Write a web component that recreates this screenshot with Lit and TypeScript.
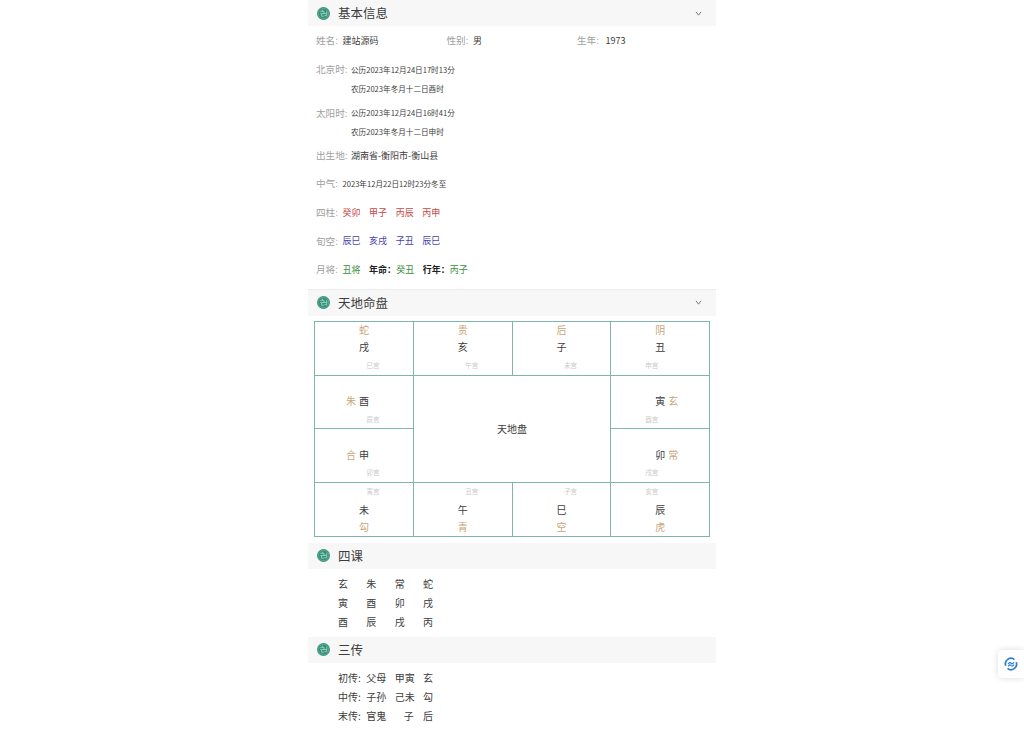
import { LitElement, html, css, svg } from "lit";
import { customElement } from "lit/decorators.js";

const emblem = html`<svg class="emblem" viewBox="0 0 24 24" aria-hidden="true">
  <circle cx="12" cy="12" r="12" fill="#35917a"></circle>
  <circle cx="12" cy="12" r="9.800" fill="none" stroke="#6fb5a0" stroke-width="1.200"></circle>
  ${svg`<path d="M6 8h7v4H8.500v5H13M18 7v9h-4.500M6 12h2.500M11 12h7M10 5v3" fill="none" stroke="#a5d3c4" stroke-width="1.500"></path>`}
</svg>`;

const chevron = html`<svg class="chev" viewBox="0 0 8 6" aria-hidden="true"><path d="M1 1l3 4 3-4" fill="none" stroke="#666" stroke-width="1"></path></svg>`;

function head(title: string, arrow = false, extra = "") {
  return html`<div class="head ${extra}">${emblem}<span class="title">${title}</span>${arrow ? chevron : ""}</div>`;
}

type Cell = { g: string; z: string; p: string; kind: "top" | "bottom" | "left" | "right"; shift?: boolean };

function cell(c: Cell) {
  const lab = html`<div class="line lab ${c.shift ? "shift" : ""}">${c.p}</div>`;
  if (c.kind === "top")
    return html`<div class="cell rise"><div class="line gold">${c.g}</div><div class="line">${c.z}</div>${lab}</div>`;
  if (c.kind === "bottom")
    return html`<div class="cell">${lab}<div class="line">${c.z}</div><div class="line gold">${c.g}</div></div>`;
  return html`<div class="cell rise ${c.kind}">
    <div class="line"></div>
    <div class="line side">
      <span class="gold l">${c.kind === "left" ? c.g : ""}</span><span>${c.z}</span><span class="gold r">${c.kind === "right" ? c.g : ""}</span>
    </div>
    ${lab}
  </div>`;
}

@customElement("app-root")
export class AppRoot extends LitElement {
  static styles = css`
    :host { display: block; font-family: "Noto Sans CJK SC", "Noto Sans", sans-serif; color: #3c3c3c; font-size: 9px; }
    .page { width: 408px; margin: 0 auto; }
    .head { height: 26px; background: #f7f7f7; display: flex; align-items: center; padding: 0 14px 0 9px; }
    .head.ruled { border-top: 1px solid #ececec; }
    .emblem { width: 13px; height: 13px; flex: none; }
    .title { margin-left: 8px; font-size: 12.5px; color: #3c3c3c; flex: 1; line-height: 1; }
    .chev { width: 7px; height: 5px; }
    .info { padding: 0 8px 5.75px; }
    .row { display: flex; align-items: center; height: 28.33px; white-space: nowrap; }
    .row.thin { height: 19px; }
    .trio { display: grid; grid-template-columns: 130.5px 130.5px 1fr; height: 28px; }
    .trio > div { display: flex; align-items: center; }
    .group { margin-top: 5.5px; }
    .late { padding-top: 0.6px; }
    .k { color: #a0a0a0; font-size: 9.6px; width: 26.5px; flex: none; display: inline-block; white-space: nowrap; }
    .k3 { width: 35px; }
    .tiny { font-size: 7.6px; }
    .yr { margin-left: 2px; }
    .vals { display: flex; gap: 8.6px; }
    .red { color: #c44a44; }
    .blue { color: #4646a8; }
    .green { color: #3a8f3a; }
    b { color: #222; font-weight: 700; }
    .board {
      margin: 5px 6px 6px; width: 396px; height: 216px; box-sizing: border-box;
      display: grid; grid-template-columns: repeat(4, 1fr); grid-template-rows: repeat(4, 1fr);
      gap: 1px; padding: 1px; background: #7fb6ab;
    }
    .cell { background: #fff; font-size: 10px; text-align: center; color: #3c3c3c; }
    .line { height: 17.5px; line-height: 17.5px; }
    .rise .line { line-height: 16.5px; }
    .rise .lab { line-height: 17.5px; }
    .gold { color: #c8a679; }
    .lab { font-size: 6.5px; color: #cacaca; padding-left: 18px; }
    .lab.shift { padding-left: 0; margin-right: 17px; }
    .side { display: grid; grid-template-columns: 1fr auto 1fr; column-gap: 3px; }
    .side .l { text-align: right; }
    .side .r { text-align: left; }
    .center { grid-column: 2 / span 2; grid-row: 2 / span 2; background: #fff; display: flex; align-items: center; justify-content: center; font-size: 10px; color: #3c3c3c; }
    .lines { padding: 5px 0 6px 30px; font-size: 10px; color: #3c3c3c; }
    .lines.last { padding-bottom: 0; }
    .tr { display: grid; grid-template-columns: repeat(4, 28.33px); height: 19px; line-height: 19px; white-space: nowrap; }
    .pad { padding-left: 9px; }
    .float {
      position: fixed; right: 0; top: 650px; width: 26px; height: 28px; background: #fff;
      border-radius: 4px 0 0 4px; box-shadow: 0 0 6px rgba(0,0,0,.14);
      display: flex; align-items: center; justify-content: center;
    }
    .float svg { width: 14px; height: 14px; }
  `;

  render() {
    const top: Cell[] = [
      { g: "蛇", z: "戌", p: "巳宫", kind: "top" },
      { g: "贵", z: "亥", p: "午宫", kind: "top" },
      { g: "后", z: "子", p: "未宫", kind: "top" },
      { g: "阴", z: "丑", p: "申宫", kind: "top", shift: true },
    ];
    const bottom: Cell[] = [
      { g: "勾", z: "未", p: "寅宫", kind: "bottom" },
      { g: "青", z: "午", p: "丑宫", kind: "bottom" },
      { g: "空", z: "巳", p: "子宫", kind: "bottom" },
      { g: "虎", z: "辰", p: "亥宫", kind: "bottom", shift: true },
    ];
    return html`<div class="page">
      ${head("基本信息", true)}
      <div class="info">
        <div class="row trio">
          <div><span class="k">姓名:</span><span>建站源码</span></div>
          <div><span class="k">性别:</span><span>男</span></div>
          <div><span class="k">生年:</span><span class="yr">1973</span></div>
        </div>
        <div class="group">
          <div class="row thin"><span class="k k3">北京时:</span><span class="tiny">公历2023年12月24日17时13分</span></div>
          <div class="row thin"><span class="k k3"></span><span class="tiny">农历2023年冬月十二日酉时</span></div>
        </div>
        <div class="group">
          <div class="row thin"><span class="k k3">太阳时:</span><span class="tiny">公历2023年12月24日16时41分</span></div>
          <div class="row thin"><span class="k k3"></span><span class="tiny">农历2023年冬月十二日申时</span></div>
        </div>
        <div class="row"><span class="k k3">出生地:</span><span>湖南省-衡阳市-衡山县</span></div>
        <div class="row"><span class="k">中气:</span><span class="tiny">2023年12月22日12时23分冬至</span></div>
        <div class="late">
          <div class="row"><span class="k">四柱:</span><span class="vals red"><span>癸卯</span><span>甲子</span><span>丙辰</span><span>丙申</span></span></div>
          <div class="row"><span class="k">旬空:</span><span class="vals blue"><span>辰巳</span><span>亥戌</span><span>子丑</span><span>辰巳</span></span></div>
          <div class="row"><span class="k">月将:</span><span class="vals"><span class="green">丑将</span><span><b>年命：</b><span class="green">癸丑</span></span><span><b>行年：</b><span class="green">丙子</span></span></span></div>
        </div>
      </div>
      ${head("天地命盘", true, "ruled")}
      <div class="board">
        ${top.map(cell)}
        ${cell({ g: "朱", z: "酉", p: "辰宫", kind: "left" })}
        <div class="center">天地盘</div>
        ${cell({ g: "玄", z: "寅", p: "酉宫", kind: "right", shift: true })}
        ${cell({ g: "合", z: "申", p: "卯宫", kind: "left" })}
        ${cell({ g: "常", z: "卯", p: "戌宫", kind: "right", shift: true })}
        ${bottom.map(cell)}
      </div>
      ${head("四课")}
      <div class="lines">
        <div class="tr"><span>玄</span><span>朱</span><span>常</span><span>蛇</span></div>
        <div class="tr"><span>寅</span><span>酉</span><span>卯</span><span>戌</span></div>
        <div class="tr"><span>酉</span><span>辰</span><span>戌</span><span>丙</span></div>
      </div>
      ${head("三传")}
      <div class="lines last">
        <div class="tr"><span>初传:</span><span>父母</span><span>甲寅</span><span>玄</span></div>
        <div class="tr"><span>中传:</span><span>子孙</span><span>己未</span><span>勾</span></div>
        <div class="tr"><span>末传:</span><span>官鬼</span><span class="pad">子</span><span>后</span></div>
      </div>
      <div class="float">
        <svg viewBox="0 0 24 24" aria-hidden="true">
          <path d="M3 15A9.500 9.500 0 0 1 18 4.500M21 9A9.500 9.500 0 0 1 6 19.500" fill="none" stroke="#2b7fd4" stroke-width="3"></path>
          <path d="M7 12c2-3 4-3 5-1.500s3 1.500 5-1.500M7 16c2-3 4-3 5-1.500s3 1.500 5-1.500" fill="none" stroke="#2b7fd4" stroke-width="2"></path>
        </svg>
      </div>
    </div>`;
  }
}
